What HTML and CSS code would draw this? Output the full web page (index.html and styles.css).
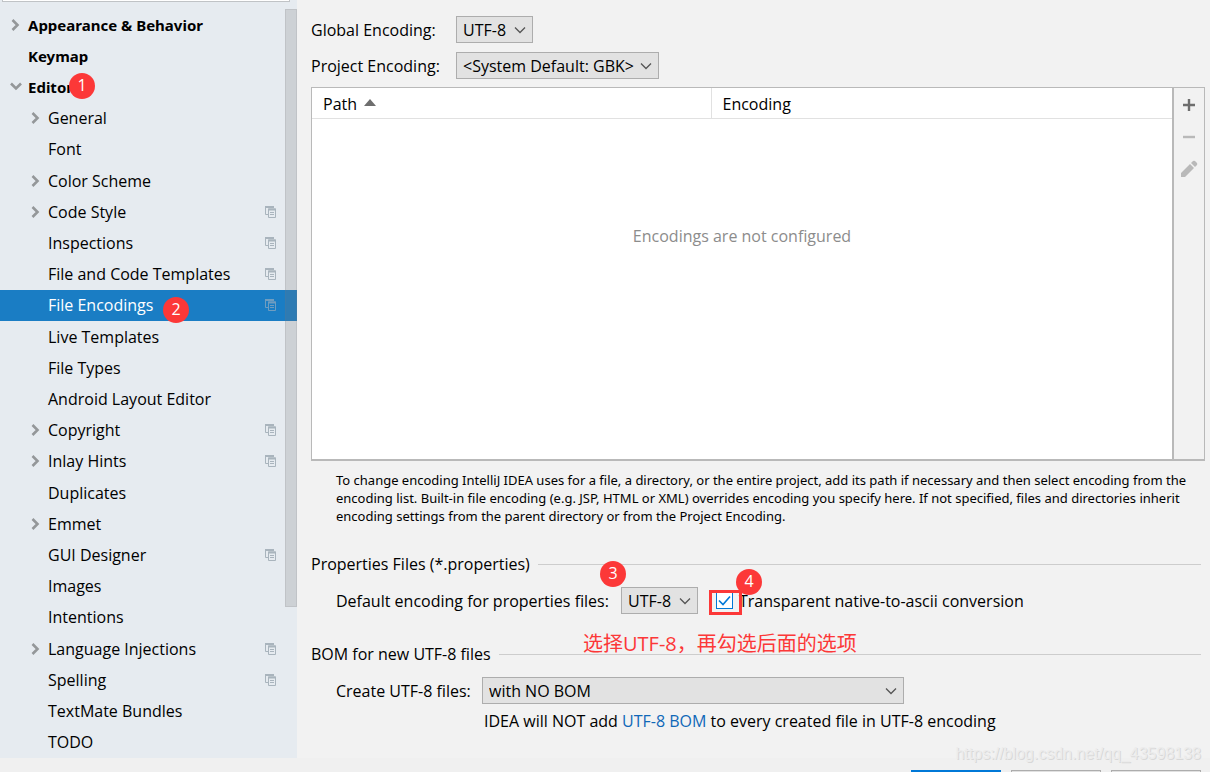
FILE: index.html
```
<!DOCTYPE html>
<html lang="en">

<head>
    <meta charset="UTF-8">
    <meta name="viewport" content="width=device-width, initial-scale=1.0">
    <title>Settings - File Encodings</title>
    <link rel="stylesheet" href="styles.css">
</head>

<body>
    <!-- Shared icons -->
    <svg class="defs" aria-hidden="true">
        <symbol id="arrow" viewBox="0 0 12 14">
            <path d="M2.5 2 L7.5 7 L2.5 12" fill="none" stroke="#949799" stroke-width="2.6" />
        </symbol>
        <symbol id="copy" viewBox="0 0 12 12">
            <path d="M3 8.5 H0.5 V0.5 H8.5 V2" fill="none" stroke="currentColor" />
            <path d="M0 1 H9" stroke="currentColor" stroke-width="2" />
            <path d="M3.5 3 H10.5 V11.5 H3.5 Z" fill="none" stroke="currentColor" />
            <path d="M3 3.5 H11" stroke="currentColor" stroke-width="2" />
            <path d="M5 6.5 H9 M5 8.5 H9" stroke="currentColor" />
        </symbol>
    </svg>

    <div class="dialog">
        <div class="content">
            <nav class="sidebar">
                <div class="search"></div>
                <ul class="tree">
                    <li class="item top"><svg class="arrow"><use href="#arrow" /></svg><span>Appearance &amp; Behavior</span></li>
                    <li class="item top"><span>Keymap</span></li>
                    <li class="item top"><svg class="arrow open"><use href="#arrow" /></svg><span>Editor</span><b class="badge badge1">1</b></li>
                    <li class="item"><svg class="arrow"><use href="#arrow" /></svg><span>General</span></li>
                    <li class="item"><span>Font</span></li>
                    <li class="item"><svg class="arrow"><use href="#arrow" /></svg><span>Color Scheme</span></li>
                    <li class="item"><svg class="arrow"><use href="#arrow" /></svg><span>Code Style</span><svg class="copy"><use href="#copy" /></svg></li>
                    <li class="item"><span>Inspections</span><svg class="copy"><use href="#copy" /></svg></li>
                    <li class="item"><span>File and Code Templates</span><svg class="copy"><use href="#copy" /></svg></li>
                    <li class="item selected"><span>File Encodings</span><svg class="copy"><use href="#copy" /></svg><b class="badge badge2">2</b></li>
                    <li class="item"><span>Live Templates</span></li>
                    <li class="item"><span>File Types</span></li>
                    <li class="item"><span>Android Layout Editor</span></li>
                    <li class="item"><svg class="arrow"><use href="#arrow" /></svg><span>Copyright</span><svg class="copy"><use href="#copy" /></svg></li>
                    <li class="item"><svg class="arrow"><use href="#arrow" /></svg><span>Inlay Hints</span><svg class="copy"><use href="#copy" /></svg></li>
                    <li class="item"><span>Duplicates</span></li>
                    <li class="item"><svg class="arrow"><use href="#arrow" /></svg><span>Emmet</span></li>
                    <li class="item"><span>GUI Designer</span><svg class="copy"><use href="#copy" /></svg></li>
                    <li class="item"><span>Images</span></li>
                    <li class="item"><span>Intentions</span></li>
                    <li class="item"><svg class="arrow"><use href="#arrow" /></svg><span>Language Injections</span><svg class="copy"><use href="#copy" /></svg></li>
                    <li class="item"><span>Spelling</span><svg class="copy"><use href="#copy" /></svg></li>
                    <li class="item"><span>TextMate Bundles</span></li>
                    <li class="item"><span>TODO</span></li>
                </ul>
                <div class="scrollbar"></div>
            </nav>

            <main class="main">
                <div class="fields">
                    <div class="field">
                        <label for="global">Global Encoding:</label>
                        <select id="global" class="small">
                            <option>UTF-8</option>
                        </select>
                    </div>
                    <div class="field">
                        <label for="project">Project Encoding:</label>
                        <select id="project" class="medium">
                            <option>&lt;System Default: GBK&gt;</option>
                        </select>
                    </div>
                </div>

                <div class="panel">
                    <div class="tableBox">
                        <table>
                            <thead>
                                <tr>
                                    <th class="path">Path <svg class="sort" viewBox="0 0 12 7"><path d="M6 0 L12 7 H0 Z" fill="#6e6e6e" /></svg></th>
                                    <th>Encoding</th>
                                </tr>
                            </thead>
                            <tbody>
                                <tr>
                                    <td colspan="2">Encodings are not configured</td>
                                </tr>
                            </tbody>
                        </table>
                    </div>
                    <div class="toolbar">
                        <button aria-label="Add"><svg viewBox="0 0 16 16"><path d="M8 2 V14 M2 8 H14" stroke="#6e6e6e" stroke-width="2.4" /></svg></button>
                        <button aria-label="Remove" disabled><svg viewBox="0 0 16 16"><path d="M2 8 H14" stroke="#b9b9b9" stroke-width="2.4" /></svg></button>
                        <button aria-label="Edit" disabled><svg viewBox="0 0 16 16"><path d="M0 16 V12 L9 3 L13 7 L4 16 Z M10 2 L12 0 Q13 -0.5 14 0 L16 2 Q16.5 3 16 4 L14 6 Z" fill="#b9b9b9" /></svg></button>
                    </div>
                </div>

                <p class="hint">To change encoding IntelliJ IDEA uses for a file, a directory, or the entire project, add its path if necessary and then select encoding from the<br>encoding list. Built-in file encoding (e.g. JSP, HTML or XML) overrides encoding you specify here. If not specified, files and directories inherit<br>encoding settings from the parent directory or from the Project Encoding.</p>

                <h2>Properties Files (*.properties)</h2>
                <div class="row">
                    <label for="props" class="propsLabel">Default encoding for properties files:</label>
                    <div class="marked">
                        <select id="props" class="small">
                            <option>UTF-8</option>
                        </select>
                        <b class="badge badge3">3</b>
                    </div>
                    <div class="marked checkRow">
                        <input type="checkbox" id="ascii" checked>
                        <label for="ascii">Transparent native-to-ascii conversion</label>
                        <i class="frame"></i>
                        <b class="badge badge4">4</b>
                    </div>
                    <span class="note" lang="zh">选择<b>UTF-8</b>，再勾选后面的选项</span>
                </div>

                <h2>BOM for new UTF-8 files</h2>
                <div class="row bomRow">
                    <label for="bom" class="bomLabel">Create UTF-8 files:</label>
                    <select id="bom" class="large">
                        <option>with NO BOM</option>
                    </select>
                </div>
                <p class="bomText">IDEA will NOT add <a href="#">UTF-8 BOM</a> to every created file in UTF-8 encoding</p>
            </main>
        </div>

        <footer class="footer">
            <button class="primary" aria-label="OK"></button>
            <button aria-label="Cancel"></button>
            <button aria-label="Apply"></button>
        </footer>
        <span class="watermark">https://blog.csdn.net/qq_43598138</span>
    </div>
</body>

</html>
```
FILE: styles.css
```
* {
    box-sizing: border-box;
}

body {
    margin: 0;
    background-color: #f2f2f2;
    color: #000;
    font-family: "Open Sans", "Noto Sans CJK SC", sans-serif;
    font-size: 16px;
    line-height: 20px;
}

.defs {
    display: none;
}

.dialog {
    position: relative;
    display: flex;
    flex-direction: column;
    height: 100vh;
    overflow: hidden;
}

.content {
    display: flex;
    flex: 1;
    min-height: 0;
}

/* Left tree */
.sidebar {
    position: relative;
    display: flex;
    flex-direction: column;
    flex: none;
    width: 297px;
    background-color: #e6ebf0;
}

.search {
    height: 2px;
    margin: 0 7px 7px 2px;
    border: 1px solid #c0c3c6;
    border-top: 0;
    background-color: #fff;
}

.tree {
    display: flex;
    flex-direction: column;
    flex: 1;
    margin: 0;
    padding: 0;
    list-style: none;
}

.item {
    position: relative;
    display: flex;
    align-items: center;
    flex: 1;
    padding: 0 20px 0 48px;
    white-space: nowrap;
}

.item.top {
    padding-left: 28px;
    font-family: "Noto Sans", sans-serif;
    font-size: 15px;
    font-weight: bold;
}

.item.selected {
    background-color: #1a7dc4;
    color: #fff;
}

.arrow {
    width: 12px;
    height: 14px;
    margin: 0 6px 0 -18px;
}

.arrow.open {
    transform: rotate(90deg);
}

.copy {
    width: 12px;
    height: 12px;
    margin-left: auto;
    color: #a9b4bd;
}

.selected .copy {
    color: #6f9dc0;
}

.scrollbar {
    position: absolute;
    top: 9px;
    right: 0;
    width: 12px;
    height: 598px;
    border: 1px solid rgba(120, 120, 120, 0.15);
    background-color: rgba(120, 120, 120, 0.22);
}

/* Right side */
.main {
    flex: 1;
    min-width: 0;
    padding: 16px 5px 0 14px;
}

.fields {
    display: flex;
    flex-direction: column;
    gap: 9px;
    margin-bottom: 8px;
}

.field {
    display: flex;
    align-items: center;
    height: 27px;
}

.field label {
    width: 145px;
}

select {
    height: 27px;
    padding: 0 20px 0 6px;
    border: 1px solid #adadad;
    border-radius: 0;
    appearance: none;
    background: #e2e2e2 url("data:image/svg+xml,%3Csvg xmlns='http://www.w3.org/2000/svg' width='12' height='8'%3E%3Cpath d='M1 1.5 L6 6.5 L11 1.5' fill='none' stroke='%23555' stroke-width='1.3'/%3E%3C/svg%3E") no-repeat right 6px center;
    color: #000;
    font: inherit;
}

.small {
    width: 77px;
}

.medium {
    width: 203px;
}

.large {
    width: 422px;
}

.panel {
    display: flex;
    height: 374px;
    border: 1px solid #b9b9b9;
    border-bottom-width: 2px;
}

.tableBox {
    flex: 1;
    border-right: 2px solid #b9b9b9;
    background-color: #fff;
}

table {
    width: 100%;
    height: 100%;
    border-collapse: collapse;
    table-layout: fixed;
}

th {
    height: 30px;
    padding: 2px 11px 0;
    border-bottom: 1px solid #e1e1e1;
    font-weight: normal;
    text-align: left;
}

.path {
    width: 399px;
    border-right: 1px solid #e1e1e1;
}

.sort {
    width: 12px;
    height: 7px;
    margin: 0 0 4px 3px;
}

td {
    padding: 107px 0 0;
    color: #8c8c8c;
    text-align: center;
    vertical-align: top;
}

.toolbar {
    display: flex;
    flex-direction: column;
    align-items: center;
    gap: 16px;
    width: 30px;
    padding-top: 9px;
}

.toolbar button {
    width: 16px;
    height: 16px;
    padding: 0;
    border: 0;
    background: none;
}

.toolbar svg {
    display: block;
    overflow: visible;
}

.hint {
    margin: 10px 0 29px 25px;
    font-family: "Noto Sans", sans-serif;
    font-size: 13px;
    line-height: 18px;
    white-space: nowrap;
}

h2 {
    display: flex;
    align-items: center;
    gap: 8px;
    margin: 0 4px 13px 0;
    font-size: 16px;
    font-weight: normal;
}

h2::after {
    content: "";
    flex: 1;
    height: 1px;
    background-color: #cdcdcd;
}

.row {
    position: relative;
    display: flex;
    align-items: center;
    height: 27px;
    margin: 0 0 30px 25px;
    white-space: nowrap;
}

.row.bomRow {
    margin-bottom: 7px;
}

.propsLabel {
    width: 285px;
}

.bomLabel {
    width: 146px;
}

.marked {
    position: relative;
    display: flex;
    align-items: center;
}

.checkRow {
    margin-left: 18px;
}

input[type="checkbox"] {
    width: 17px;
    height: 17px;
    margin: 0 6px 0 0;
    border: 1px solid #0078d7;
    appearance: none;
    background: #fff url("data:image/svg+xml,%3Csvg xmlns='http://www.w3.org/2000/svg' width='15' height='15'%3E%3Cpath d='M2 7.5 L6 11.5 L13 3.5' fill='none' stroke='%230078d7' stroke-width='1.6'/%3E%3C/svg%3E") no-repeat center;
}

.bomText {
    margin: 0 0 0 173px;
    white-space: nowrap;
}

a {
    color: #1068b8;
    text-decoration: none;
}

/* Red annotations */
.badge {
    position: absolute;
    width: 26px;
    height: 26px;
    border-radius: 50%;
    background-color: #fc3838;
    color: #fff;
    font-family: "Open Sans", sans-serif;
    font-size: 16px;
    font-weight: normal;
    line-height: 24px;
    text-align: center;
}

.badge1 {
    top: 2px;
    left: 69px;
}

.badge2 {
    top: 7px;
    left: 163px;
}

.badge3 {
    top: -26px;
    left: -21px;
}

.badge4 {
    top: -22px;
    left: 20px;
}

.frame {
    position: absolute;
    top: -1px;
    left: -7px;
    width: 33px;
    height: 25px;
    border: 3px solid #fc3838;
}

.note {
    position: absolute;
    top: 43px;
    left: 247px;
    color: #fc3838;
    font-size: 20px;
    line-height: 28px;
}

.note b {
    font-weight: 500;
}

/* Bottom buttons */
.footer {
    display: flex;
    justify-content: flex-end;
    gap: 10px;
    flex: none;
    height: 14px;
    padding: 12px 9px 0 0;
    background-color: #f0f0f0;
}

.footer button {
    width: 90px;
    height: 28px;
    border: 1px solid #adadad;
    background-color: #e1e1e1;
}

.footer .primary {
    border: 2px solid #0078d7;
}

.watermark {
    position: absolute;
    right: 9px;
    bottom: 8px;
    color: #ececec;
    font-family: "Liberation Sans", sans-serif;
    font-size: 16px;
    text-shadow: 1px 1px 0 #d8d8d8;
}
```
